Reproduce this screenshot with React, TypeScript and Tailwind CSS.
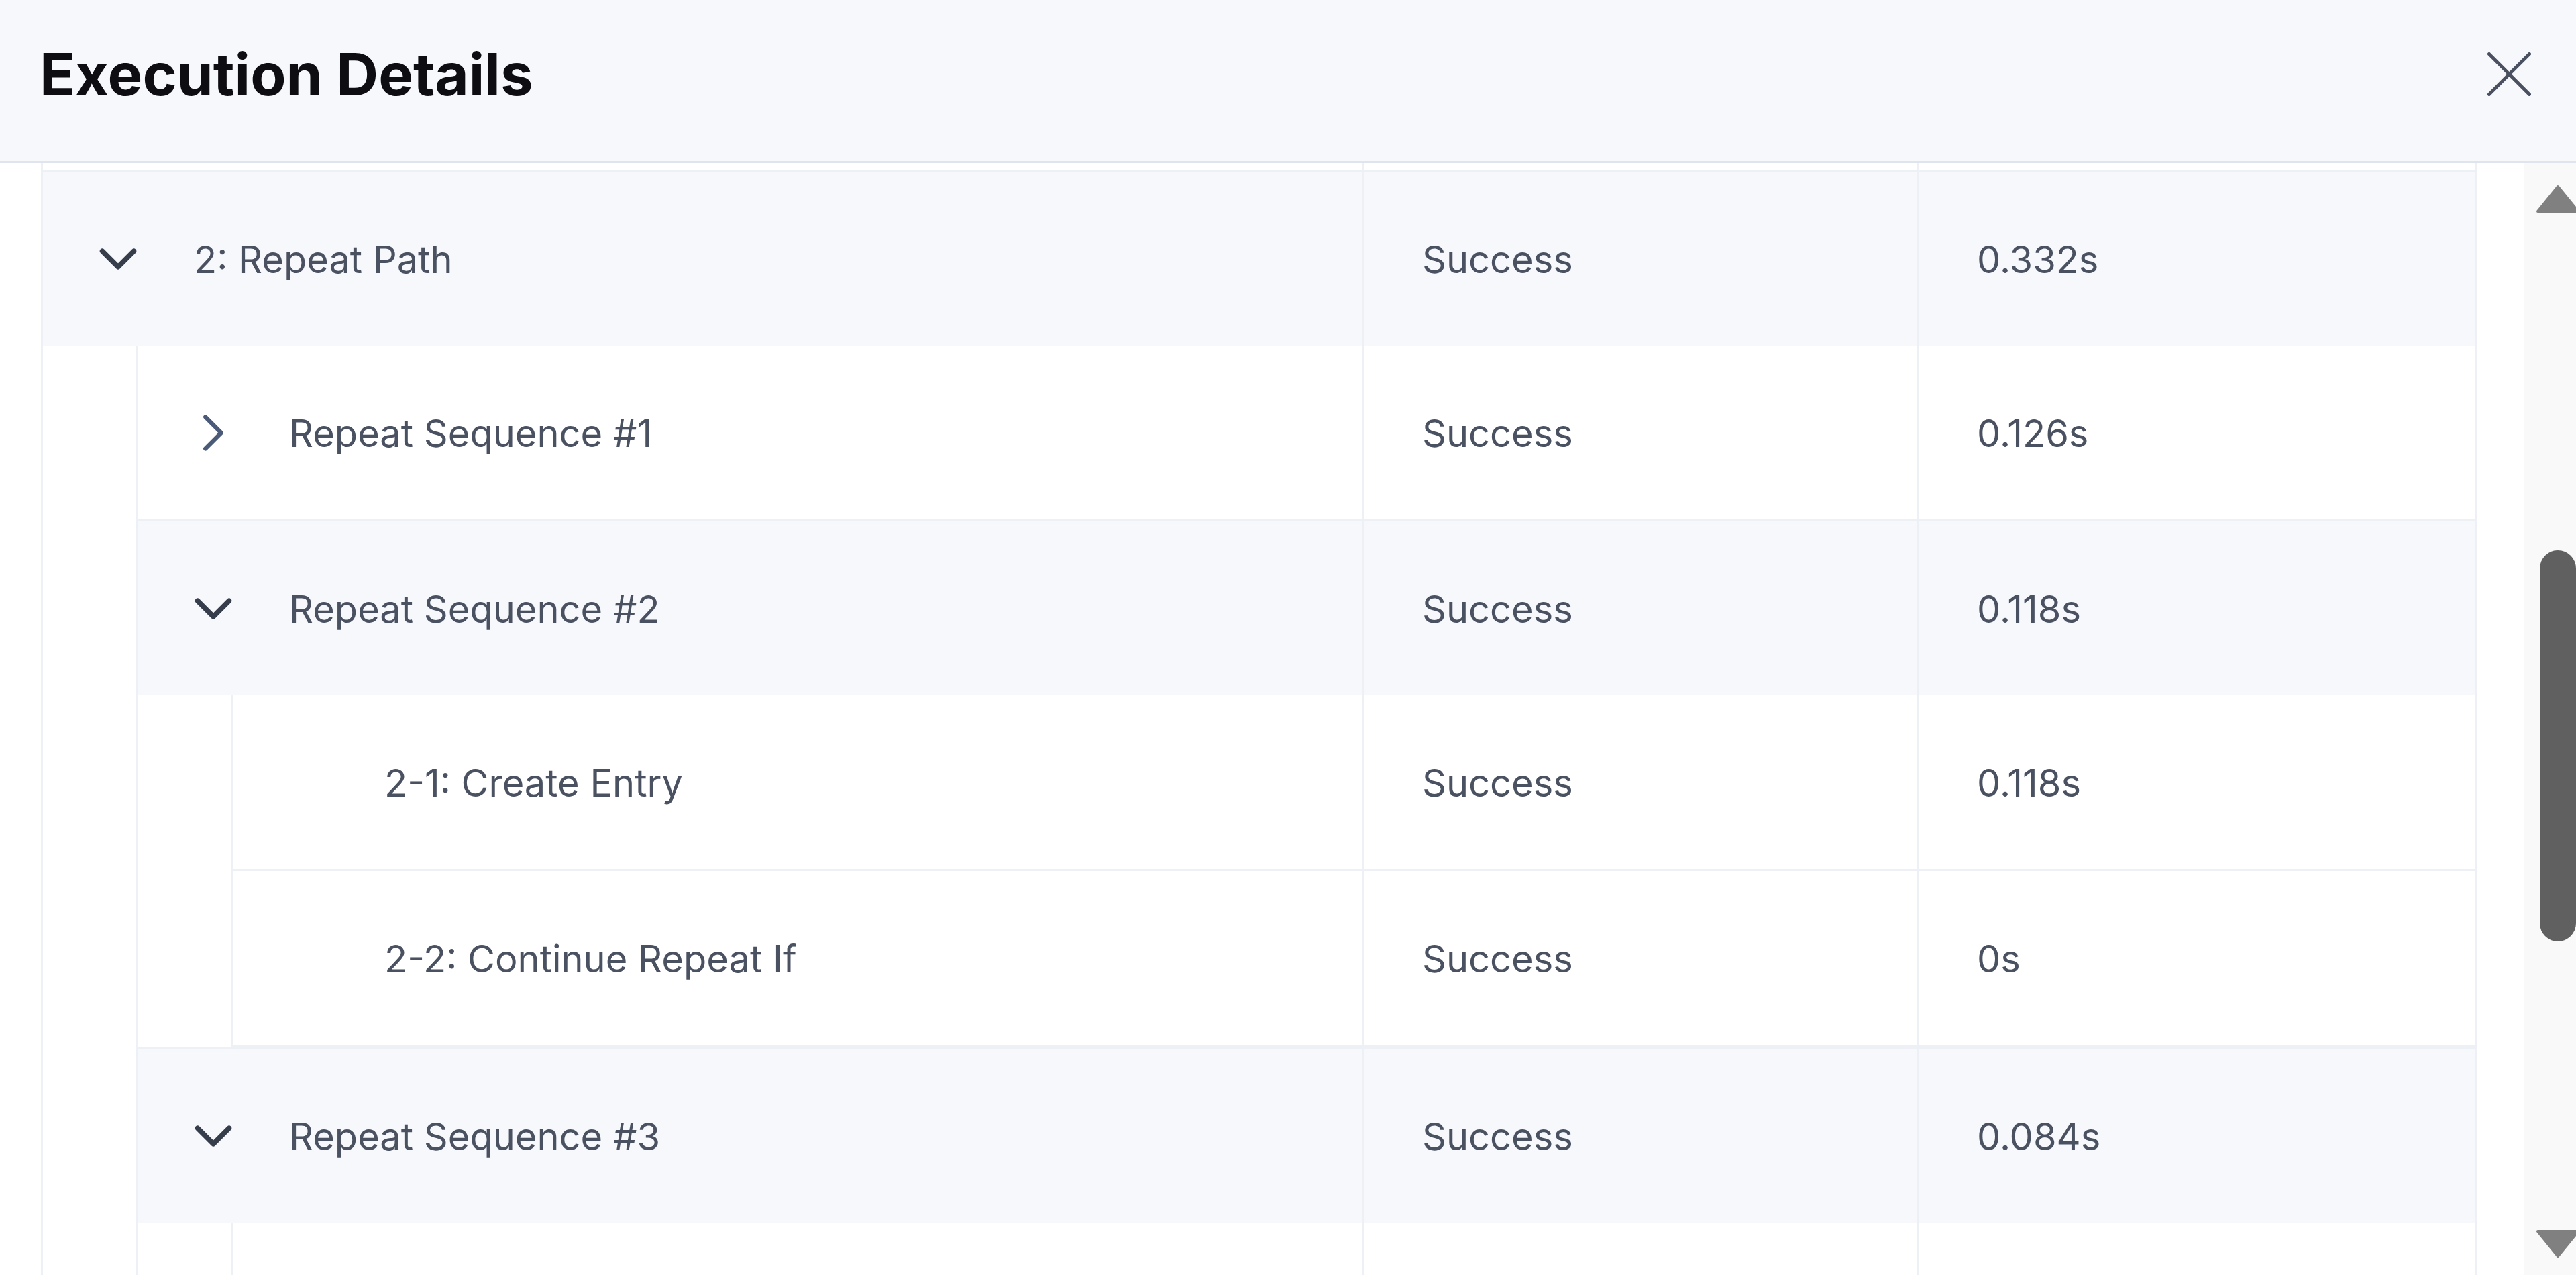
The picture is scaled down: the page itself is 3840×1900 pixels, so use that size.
import clsx from "clsx"

type Step = {
  id: string
  name: string
  status: string
  duration: string
  open?: boolean
  children?: Step[]
}

const STEPS: Step[] = [
  {
    id: "2",
    name: "2: Repeat Path",
    status: "Success",
    duration: "0.332s",
    open: true,
    children: [
      {
        id: "2-seq-1",
        name: "Repeat Sequence #1",
        status: "Success",
        duration: "0.126s",
        children: [
          { id: "2-seq-1-1", name: "2-1: Create Entry", status: "Success", duration: "0.126s" },
          { id: "2-seq-1-2", name: "2-2: Continue Repeat If", status: "Success", duration: "0s" },
        ],
      },
      {
        id: "2-seq-2",
        name: "Repeat Sequence #2",
        status: "Success",
        duration: "0.118s",
        open: true,
        children: [
          { id: "2-seq-2-1", name: "2-1: Create Entry", status: "Success", duration: "0.118s" },
          { id: "2-seq-2-2", name: "2-2: Continue Repeat If", status: "Success", duration: "0s" },
        ],
      },
      {
        id: "2-seq-3",
        name: "Repeat Sequence #3",
        status: "Success",
        duration: "0.084s",
        open: true,
        children: [
          { id: "2-seq-3-1", name: "2-1: Create Entry", status: "Success", duration: "0.084s" },
          { id: "2-seq-3-2", name: "2-2: Continue Repeat If", status: "Success", duration: "0s" },
        ],
      },
    ],
  },
]

function ChevronDown() {
  return (
    <svg width="94" height="94" viewBox="0 0 24 24" fill="none" stroke="#363d4b" strokeWidth="1.9" strokeLinecap="round" strokeLinejoin="round">
      <path d="m6 9 6 6 6-6" />
    </svg>
  )
}

function ChevronRight() {
  return (
    <svg width="94" height="94" viewBox="0 0 24 24" fill="none" stroke="#4c5a7a" strokeWidth="1.6" strokeLinecap="round" strokeLinejoin="round">
      <path d="m9 18 6-6-6-6" />
    </svg>
  )
}

function CloseIcon() {
  return (
    <svg width="65" height="65" viewBox="0 0 65 65" fill="none" stroke="#4a5060" strokeWidth="5" strokeLinecap="round">
      <path d="M2.5 2.5 62.5 62.5M62.5 2.5 2.5 62.5" />
    </svg>
  )
}

function StepRow({ step }: { step: Step }) {
  const hasChildren = !!step.children?.length
  const open = hasChildren && step.open

  return (
    <div
      className={clsx(
        "flex h-[259px] box-content text-[56px] leading-none text-[#4a5161]",
        open ? "bg-[#f7f8fc]" : "border-b-[3px] border-[#edf0f5] bg-white",
      )}
    >
      <div className="flex min-w-0 flex-1 items-center pl-[65px]">
        <span className="flex w-[94px] shrink-0 items-center justify-center">
          {hasChildren ? open ? <ChevronDown /> : <ChevronRight /> : null}
        </span>
        <span className="ml-[66px] pt-[3px] whitespace-nowrap">{step.name}</span>
      </div>
      <div className="flex w-[828px] shrink-0 items-center border-l-[3px] border-[#edf0f5] pl-[87px] pt-[3px]">
        {step.status}
      </div>
      <div className="flex w-[831px] shrink-0 items-center border-l-[3px] border-[#edf0f5] pl-[86px] pt-[3px]">
        {step.duration}
      </div>
    </div>
  )
}

function StepNode({ step }: { step: Step }) {
  const open = !!step.children?.length && step.open

  return (
    <div className={clsx(open && "border-b-[3px] border-[#edf0f5]")}>
      <StepRow step={step} />
      {open && (
        <div className="ml-[139px] border-l-[3px] border-[#edf0f5]">
          {step.children!.map((child) => (
            <StepNode key={child.id} step={child} />
          ))}
        </div>
      )}
    </div>
  )
}

function Scrollbar() {
  return (
    <div className="w-[78px] shrink-0 overflow-hidden bg-[#f9f9f9]">
      <div className="flex w-[102px] flex-col items-center pt-[32px]">
        <svg width="66" height="43" viewBox="0 0 66 43">
          <path d="M33 3 63 40H3Z" fill="#808080" stroke="#808080" strokeWidth="4" strokeLinejoin="round" />
        </svg>
        <div className="mt-[502px] h-[583px] w-[54px] rounded-full bg-[#606060]" />
        <svg className="mt-[429px]" width="66" height="43" viewBox="0 0 66 43">
          <path d="M33 40 63 3H3Z" fill="#808080" stroke="#808080" strokeWidth="4" strokeLinejoin="round" />
        </svg>
      </div>
    </div>
  )
}

export default function App() {
  return (
    <div className="h-[1900px] w-[3840px] overflow-hidden bg-white font-[family-name:Inter,sans-serif]">
      <header className="flex h-[243px] items-center justify-between border-b-[3px] border-[#e0e5ed] bg-[#f7f8fb] pb-[19px] pl-[59px] pr-[67px]">
        <h1 className="text-[87px] font-bold leading-none text-[#0d0d12]">Execution Details</h1>
        <button className="flex items-center justify-center">
          <CloseIcon />
        </button>
      </header>

      <div className="flex h-[1657px] overflow-hidden">
        <div className="flex-1 pl-[61px] pr-[70px]">
          <div className="border-x-[3px] border-[#edf0f5]">
            {/* tail of the step scrolled out above */}
            <div className="flex h-[10px] box-content border-b-[3px] border-[#edf0f5]">
              <div className="flex-1" />
              <div className="w-[828px] shrink-0 border-l-[3px] border-[#edf0f5]" />
              <div className="w-[831px] shrink-0 border-l-[3px] border-[#edf0f5]" />
            </div>
            {STEPS.map((step) => (
              <StepNode key={step.id} step={step} />
            ))}
          </div>
        </div>
        <Scrollbar />
      </div>
    </div>
  )
}
